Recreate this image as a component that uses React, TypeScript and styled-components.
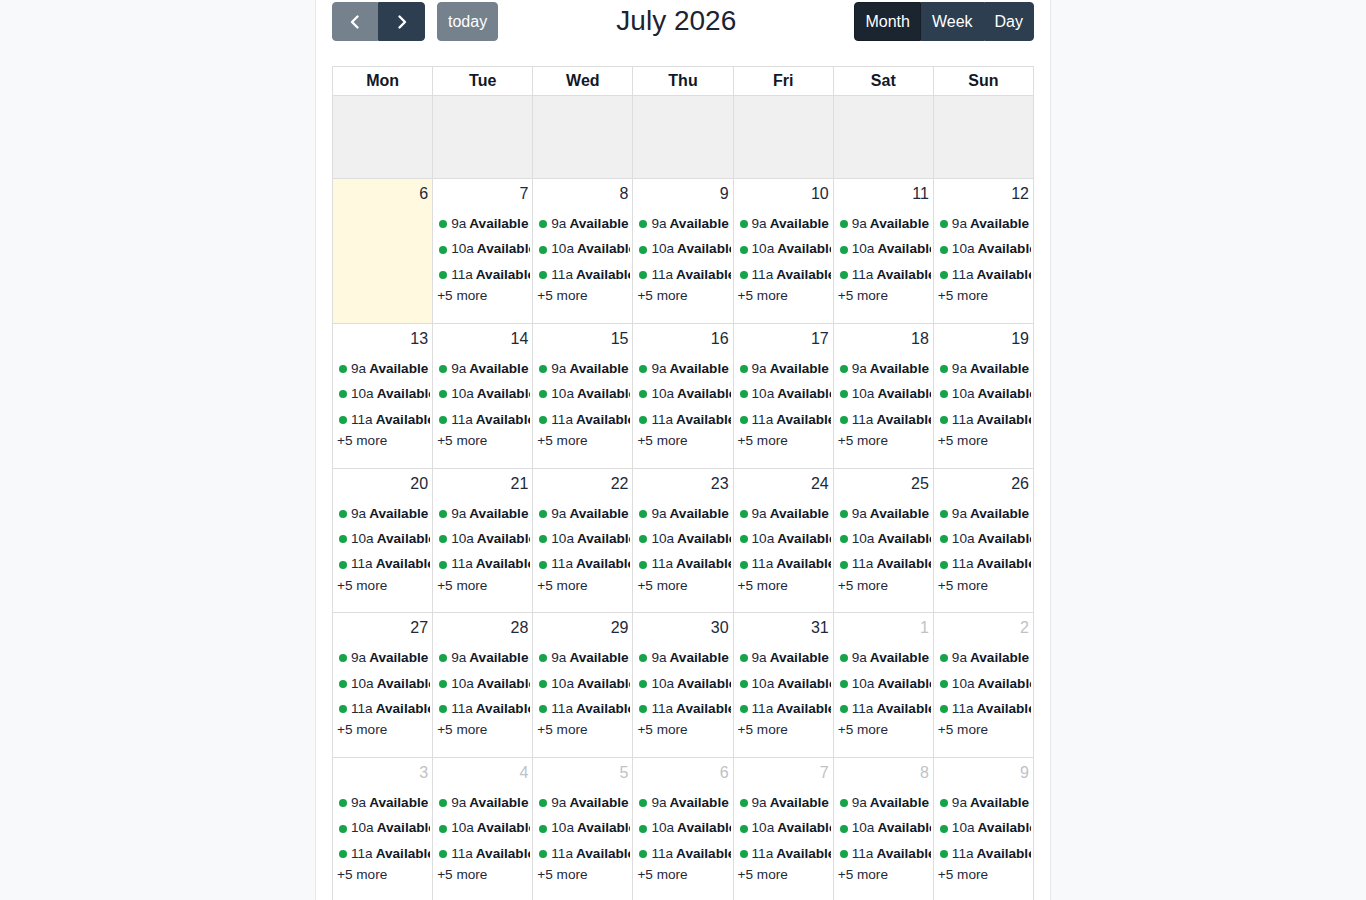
import React from "react";
import styled, { createGlobalStyle, css } from "styled-components";

const GlobalStyle = createGlobalStyle`
  body {
    margin: 0;
    background: #f8f9fb;
    font-family: "Liberation Sans", Arial, sans-serif;
    color: #1e293b;
  }
`;

const Card = styled.div`
  box-sizing: border-box;
  width: 736px;
  margin: 0 auto;
  background: #ffffff;
  border-left: 1px solid #e6e8ec;
  border-right: 1px solid #e6e8ec;
  padding: 2px 16px 16px;
`;

const Toolbar = styled.div`
  display: flex;
  justify-content: space-between;
  align-items: center;
  height: 39px;
  margin-bottom: 25px;
`;

const Chunk = styled.div`
  display: flex;
  align-items: center;
  gap: 12px;
`;

const ButtonGroup = styled.div`
  display: inline-flex;

  & > button {
    border-radius: 0;
  }
  & > button:first-child {
    border-radius: 4px 0 0 4px;
  }
  & > button:last-child {
    border-radius: 0 4px 4px 0;
  }
`;

const Button = styled.button<{ $active?: boolean; $dim?: boolean; $w?: number }>`
  box-sizing: border-box;
  display: inline-flex;
  align-items: center;
  justify-content: center;
  height: 39px;
  padding: 0 10px;
  border: 1px solid #2c3e50;
  border-radius: 4px;
  background: #2c3e50;
  color: #ffffff;
  font-family: inherit;
  font-size: 16px;
  line-height: 24px;
  cursor: pointer;
  ${(p) => p.$w && css`width: ${p.$w}px;`}
  ${(p) =>
    p.$active &&
    css`
      background: #1a252f;
      border-color: #151e27;
    `}
  ${(p) =>
    p.$dim &&
    css`
      opacity: 0.65;
    `}
`;

const Title = styled.h2`
  margin: -2px 0 0;
  font-size: 28px;
  font-weight: 400;
  line-height: 1.2;
  color: #1c2331;
`;

const Grid = styled.div`
  display: grid;
  grid-template-columns: repeat(7, 1fr);
  border-left: 1px solid #ddd;
  border-top: 1px solid #ddd;
`;

const HeaderCell = styled.div`
  height: 28px;
  border-right: 1px solid #ddd;
  border-bottom: 1px solid #ddd;
  text-align: center;
  font-weight: 700;
  font-size: 16px;
  line-height: 28px;
  color: #111827;
`;

const DayCell = styled.div<{ $today?: boolean; $disabled?: boolean; $short?: boolean }>`
  height: ${(p) => (p.$short ? "82px" : "143.75px")};
  border-right: 1px solid #ddd;
  border-bottom: 1px solid #ddd;
  overflow: hidden;
  background: ${(p) => (p.$disabled ? "#f0f0f0" : p.$today ? "#fff9df" : "#ffffff")};
`;

const DayNumber = styled.div<{ $other?: boolean }>`
  padding: 3px 4px 5px;
  text-align: right;
  font-size: 16px;
  line-height: 24px;
  color: ${(p) => (p.$other ? "#bfc2c6" : "#1e293b")};
`;

const EventRow = styled.div`
  display: flex;
  align-items: center;
  margin: 1px 2px 0;
  padding: 2px 0;
  font-size: 13.6px;
  line-height: 20.4px;
  white-space: nowrap;
  overflow: hidden;
  color: #1e293b;
`;

const Dot = styled.span`
  flex: none;
  width: 8px;
  height: 8px;
  margin: 0 4px;
  border-radius: 50%;
  background: #16a34a;
`;

const Time = styled.span`
  margin-right: 3px;
`;

const EventTitle = styled.span`
  font-weight: 700;
  color: #111827;
`;

const MoreLink = styled.div`
  padding: 0 4px;
  font-size: 13.6px;
  line-height: 18px;
  color: #1e293b;
`;

const Chevron = ({ dir }: { dir: "left" | "right" }) => (
  <svg width="16" height="16" viewBox="0 0 16 16" fill="none">
    <path
      d={dir === "left" ? "M10.5 2.5 L5 8 L10.5 13.5" : "M5.5 2.5 L11 8 L5.5 13.5"}
      stroke="#ffffff"
      strokeWidth="2.4"
      strokeLinecap="round"
      strokeLinejoin="round"
    />
  </svg>
);

const dayNames = ["Mon", "Tue", "Wed", "Thu", "Fri", "Sat", "Sun"];

type Day = { n: number; other?: boolean; today?: boolean };

const weeks: Day[][] = [
  [6, 7, 8, 9, 10, 11, 12].map((n) => ({ n, today: n === 6 })),
  [13, 14, 15, 16, 17, 18, 19].map((n) => ({ n })),
  [20, 21, 22, 23, 24, 25, 26].map((n) => ({ n })),
  [27, 28, 29, 30, 31].map((n) => ({ n } as Day)).concat([
    { n: 1, other: true },
    { n: 2, other: true },
  ]),
  [3, 4, 5, 6, 7, 8, 9].map((n) => ({ n, other: true })),
];

const slots = ["9a", "10a", "11a"];

function Cell({ day }: { day: Day }) {
  return (
    <DayCell $today={day.today}>
      <DayNumber $other={day.other}>{day.n}</DayNumber>
      {!day.today && (
        <>
          {slots.map((t) => (
            <EventRow key={t}>
              <Dot />
              <Time>{t}</Time>
              <EventTitle>Available</EventTitle>
            </EventRow>
          ))}
          <MoreLink>+5 more</MoreLink>
        </>
      )}
    </DayCell>
  );
}

export default function App() {
  return (
    <>
      <GlobalStyle />
      <Card>
        <Toolbar>
          <Chunk>
            <ButtonGroup>
              <Button $dim $w={46}>
                <Chevron dir="left" />
              </Button>
              <Button $w={47}>
                <Chevron dir="right" />
              </Button>
            </ButtonGroup>
            <Button $dim>today</Button>
          </Chunk>
          <Title>July 2026</Title>
          <Chunk>
            <ButtonGroup>
              <Button $active>Month</Button>
              <Button>Week</Button>
              <Button>Day</Button>
            </ButtonGroup>
          </Chunk>
        </Toolbar>
        <Grid>
          {dayNames.map((d) => (
            <HeaderCell key={d}>{d}</HeaderCell>
          ))}
          {dayNames.map((d) => (
            <DayCell key={"dis-" + d} $disabled $short />
          ))}
          {weeks.map((w, i) =>
            w.map((day, j) => <Cell key={i + "-" + j} day={day} />)
          )}
        </Grid>
      </Card>
    </>
  );
}
